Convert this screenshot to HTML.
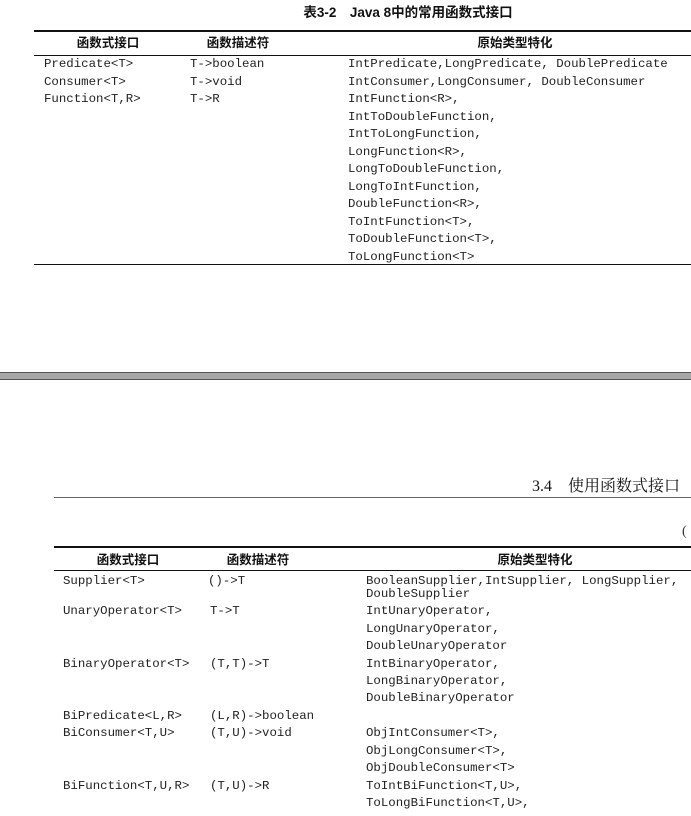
<!DOCTYPE html>
<html><head><meta charset="utf-8"><style>
body{margin:0;width:691px;height:816px;background:#fff;position:relative;overflow:hidden;font-family:"Liberation Mono",monospace;color:#222}
.t{position:absolute;font-size:12.4px;line-height:16px;white-space:pre;letter-spacing:0;margin-top:1px}
.h{position:absolute;font-family:"Liberation Sans","Noto Sans CJK SC",sans-serif;font-weight:bold;font-size:12.5px;line-height:16px;white-space:pre;transform:translateX(-50%);color:#111}
.r{position:absolute;background:#111}
</style></head><body>
<div class="h" style="left:408px;top:5px;font-size:13.5px">表3-2　Java 8中的常用函数式接口</div>
<div class="r" style="left:34px;top:30px;width:657px;height:2px"></div>
<div class="h" style="left:108px;top:35px">函数式接口</div>
<div class="h" style="left:238px;top:35px">函数描述符</div>
<div class="h" style="left:515px;top:35px">原始类型特化</div>
<div class="r" style="left:34px;top:55px;width:657px;height:1px"></div>

<div class="t" style="left:44px;top:55px">Predicate&lt;T&gt;</div>
<div class="t" style="left:190px;top:55px">T-&gt;boolean</div>
<div class="t" style="left:348px;top:55px">IntPredicate,LongPredicate, DoublePredicate</div>
<div class="t" style="left:44px;top:73px">Consumer&lt;T&gt;</div>
<div class="t" style="left:190px;top:73px">T-&gt;void</div>
<div class="t" style="left:348px;top:73px">IntConsumer,LongConsumer, DoubleConsumer</div>
<div class="t" style="left:44px;top:90px">Function&lt;T,R&gt;</div>
<div class="t" style="left:190px;top:90px">T-&gt;R</div>
<div class="t" style="left:348px;top:90px">IntFunction&lt;R&gt;,</div>
<div class="t" style="left:348px;top:108px">IntToDoubleFunction,</div>
<div class="t" style="left:348px;top:125px">IntToLongFunction,</div>
<div class="t" style="left:348px;top:143px">LongFunction&lt;R&gt;,</div>
<div class="t" style="left:348px;top:160px">LongToDoubleFunction,</div>
<div class="t" style="left:348px;top:178px">LongToIntFunction,</div>
<div class="t" style="left:348px;top:195px">DoubleFunction&lt;R&gt;,</div>
<div class="t" style="left:348px;top:213px">ToIntFunction&lt;T&gt;,</div>
<div class="t" style="left:348px;top:230px">ToDoubleFunction&lt;T&gt;,</div>
<div class="t" style="left:348px;top:248px">ToLongFunction&lt;T&gt;</div>
<div class="r" style="left:34px;top:264px;width:657px;height:1px"></div>

<div class="r" style="left:0;top:372px;width:691px;height:8px;background:#a8a8a8;border-top:1px solid #555;border-bottom:1px solid #555;box-sizing:border-box"></div>

<div style="position:absolute;right:11px;top:477px;font-family:'Liberation Serif','Noto Serif CJK SC',serif;font-size:16px;line-height:20px;white-space:pre;color:#111">3.4　使用函数式接口</div>
<div class="r" style="left:54px;top:497px;width:637px;height:1px;background:#666"></div>
<div style="position:absolute;left:682px;top:523px;font-family:'Liberation Serif',serif;font-size:14px;line-height:18px;color:#333">(</div>

<div class="r" style="left:54px;top:546px;width:637px;height:2px"></div>
<div class="h" style="left:128px;top:552px">函数式接口</div>
<div class="h" style="left:258px;top:552px">函数描述符</div>
<div class="h" style="left:535px;top:552px">原始类型特化</div>
<div class="r" style="left:54px;top:570px;width:637px;height:1px"></div>

<div class="t" style="left:63px;top:572px">Supplier&lt;T&gt;</div>
<div class="t" style="left:208px;top:572px">()-&gt;T</div>
<div class="t" style="left:366px;top:572px">BooleanSupplier,IntSupplier, LongSupplier,</div>
<div class="t" style="left:366px;top:585px">DoubleSupplier</div>
<div class="t" style="left:63px;top:602px">UnaryOperator&lt;T&gt;</div>
<div class="t" style="left:210px;top:602px">T-&gt;T</div>
<div class="t" style="left:366px;top:602px">IntUnaryOperator,</div>
<div class="t" style="left:366px;top:620px">LongUnaryOperator,</div>
<div class="t" style="left:366px;top:637px">DoubleUnaryOperator</div>
<div class="t" style="left:63px;top:655px">BinaryOperator&lt;T&gt;</div>
<div class="t" style="left:210px;top:655px">(T,T)-&gt;T</div>
<div class="t" style="left:366px;top:655px">IntBinaryOperator,</div>
<div class="t" style="left:366px;top:672px">LongBinaryOperator,</div>
<div class="t" style="left:366px;top:689px">DoubleBinaryOperator</div>
<div class="t" style="left:63px;top:707px">BiPredicate&lt;L,R&gt;</div>
<div class="t" style="left:210px;top:707px">(L,R)-&gt;boolean</div>
<div class="t" style="left:63px;top:724px">BiConsumer&lt;T,U&gt;</div>
<div class="t" style="left:210px;top:724px">(T,U)-&gt;void</div>
<div class="t" style="left:366px;top:724px">ObjIntConsumer&lt;T&gt;,</div>
<div class="t" style="left:366px;top:742px">ObjLongConsumer&lt;T&gt;,</div>
<div class="t" style="left:366px;top:759px">ObjDoubleConsumer&lt;T&gt;</div>
<div class="t" style="left:63px;top:777px">BiFunction&lt;T,U,R&gt;</div>
<div class="t" style="left:210px;top:777px">(T,U)-&gt;R</div>
<div class="t" style="left:366px;top:777px">ToIntBiFunction&lt;T,U&gt;,</div>
<div class="t" style="left:366px;top:794px">ToLongBiFunction&lt;T,U&gt;,</div>
</body></html>
